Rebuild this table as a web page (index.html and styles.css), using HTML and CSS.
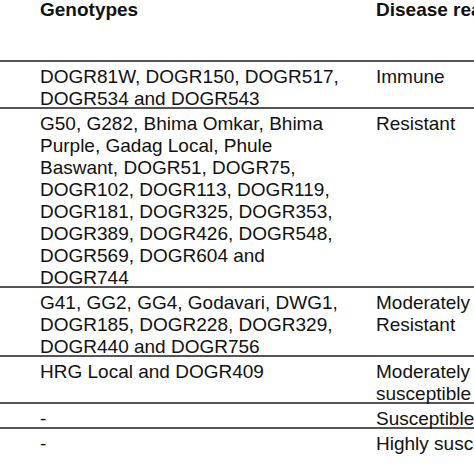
FILE: index.html
```html
<!DOCTYPE html>
<html>
<head>
<meta charset="utf-8">
<link rel="stylesheet" href="styles.css">
</head>
<body>
<table class="tbl">
  <colgroup><col class="c-pad"><col class="c-gen"><col class="c-dis"></colgroup>
  <thead>
    <tr class="head"><th></th><th>Genotypes</th><th>Disease reaction</th></tr>
  </thead>
  <tbody>
    <tr><td></td><td><div class="cell">DOGR81W, DOGR150, DOGR517,<br>DOGR534 and DOGR543</div></td><td><div class="cell">Immune</div></td></tr>
    <tr><td></td><td><div class="cell">G50, G282, Bhima Omkar, Bhima<br>Purple, Gadag Local, Phule<br>Baswant, DOGR51, DOGR75,<br>DOGR102, DOGR113, DOGR119,<br>DOGR181, DOGR325, DOGR353,<br>DOGR389, DOGR426, DOGR548,<br>DOGR569, DOGR604 and<br>DOGR744</div></td><td><div class="cell">Resistant</div></td></tr>
    <tr><td></td><td><div class="cell">G41, GG2, GG4, Godavari, DWG1,<br>DOGR185, DOGR228, DOGR329,<br>DOGR440 and DOGR756</div></td><td><div class="cell">Moderately<br>Resistant</div></td></tr>
    <tr><td></td><td><div class="cell">HRG Local and DOGR409</div></td><td><div class="cell">Moderately<br>susceptible</div></td></tr>
    <tr><td></td><td><div class="cell">-</div></td><td><div class="cell">Susceptible</div></td></tr>
    <tr><td></td><td><div class="cell">-</div></td><td><div class="cell">Highly susceptible</div></td></tr>
  </tbody>
</table>
</body>
</html>
```
FILE: styles.css
```css
html, body {
  margin: 0;
  padding: 0;
  overflow: hidden;
  background: #fff;
}
body {
  width: 474px;
  height: 474px;
}
.tbl {
  border-collapse: collapse;
  table-layout: fixed;
  width: 600px;
  font-family: "Liberation Sans", Arial, sans-serif;
  font-size: 19px;
  line-height: 22px;
  color: #111;
}
.c-pad { width: 40px; }
.c-gen { width: 336px; }
.c-dis { width: 224px; }
.tbl th, .tbl td {
  padding: 1px 0 0 0;
  text-align: left;
  vertical-align: top;
  white-space: nowrap;
}
.tbl th {
  font-weight: bold;
  height: 60px;
  padding: 0;
}
.head th {
  line-height: 20px;
}
.cell {
  padding-top: 3px;
  margin-bottom: -3px;
}
.tbl tbody tr {
  border-top: 2px solid #555;
}
```
